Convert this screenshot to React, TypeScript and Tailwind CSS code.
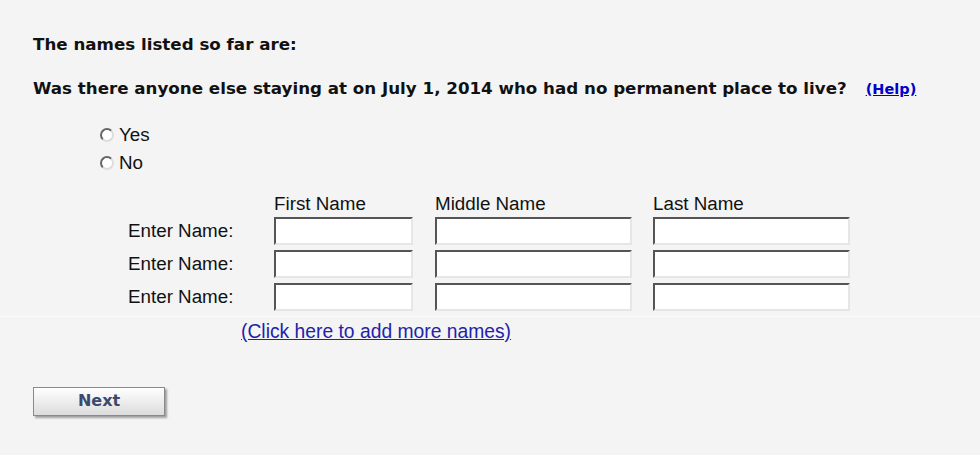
import React from "react"

const rows = [0, 1, 2]

function NameInput({ width }: { width: string }) {
  return (
    <input
      type="text"
      className={`${width} h-[28px] bg-white border-2 border-t-[#555] border-l-[#555] border-b-[#e6e6e6] border-r-[#e6e6e6] outline-none`}
    />
  )
}

function Radio({ label }: { label: string }) {
  return (
    <label className="flex items-center h-[28px]">
      <span className="w-[14px] h-[14px] rounded-full border-2 border-t-[#666] border-l-[#666] border-b-[#ddd] border-r-[#ddd] bg-white" />
      <span className="ml-[5px]">{label}</span>
    </label>
  )
}

export default function App() {
  return (
    <div className="w-[980px] h-[455px] bg-[#f4f4f4] text-[#111] font-['Liberation_Sans',Arial,sans-serif] text-[18.8px] leading-[28px] overflow-hidden">
      <div className="pl-[33px] pt-[33px] font-['DejaVu_Sans',Verdana,sans-serif] font-bold text-[16.7px]">
        <p className="h-[22px] leading-[22px]">The names listed so far are:</p>
        <p className="mt-[22px] h-[22px] leading-[22px]">
          Was there anyone else staying at on July 1, 2014 who had no permanent place to live?
          <a href="#" className="ml-[19px] text-[14.5px] text-[#0000cc] underline">(Help)</a>
        </p>
      </div>

      <div className="pl-[100px] mt-[22px]">
        <Radio label="Yes" />
        <Radio label="No" />
      </div>

      <div className="pl-[128px] mt-[13px]">
        <div className="flex h-[27px] items-center">
          <div className="w-[146px]" />
          <div className="w-[161px]">First Name</div>
          <div className="w-[218px]">Middle Name</div>
          <div>Last Name</div>
        </div>
        <div className="flex flex-col gap-[5px] pb-[5px]">
          {rows.map((r) => (
            <div key={r} className="flex items-center">
              <div className="w-[146px]">Enter Name:</div>
              <NameInput width="w-[139px]" />
              <div className="w-[22px]" />
              <NameInput width="w-[197px]" />
              <div className="w-[21px]" />
              <NameInput width="w-[197px]" />
            </div>
          ))}
        </div>
      </div>

      <div className="border-t border-[#fbfbfb] pt-[1px] pl-[241px]">
        <a href="#" className="text-[19.3px] text-[#2222aa] underline">(Click here to add more names)</a>
      </div>

      <div className="pl-[33px] mt-[40px]">
        <button className="w-[132px] h-[29px] border border-[#8a8a8a] bg-gradient-to-b from-white to-[#dcdcdc] shadow-[2px_2px_2px_rgba(0,0,0,0.35)] font-['DejaVu_Sans',Verdana,sans-serif] font-bold text-[16px] leading-[26px] text-[#3b4a6b]">
          Next
        </button>
      </div>
    </div>
  )
}
